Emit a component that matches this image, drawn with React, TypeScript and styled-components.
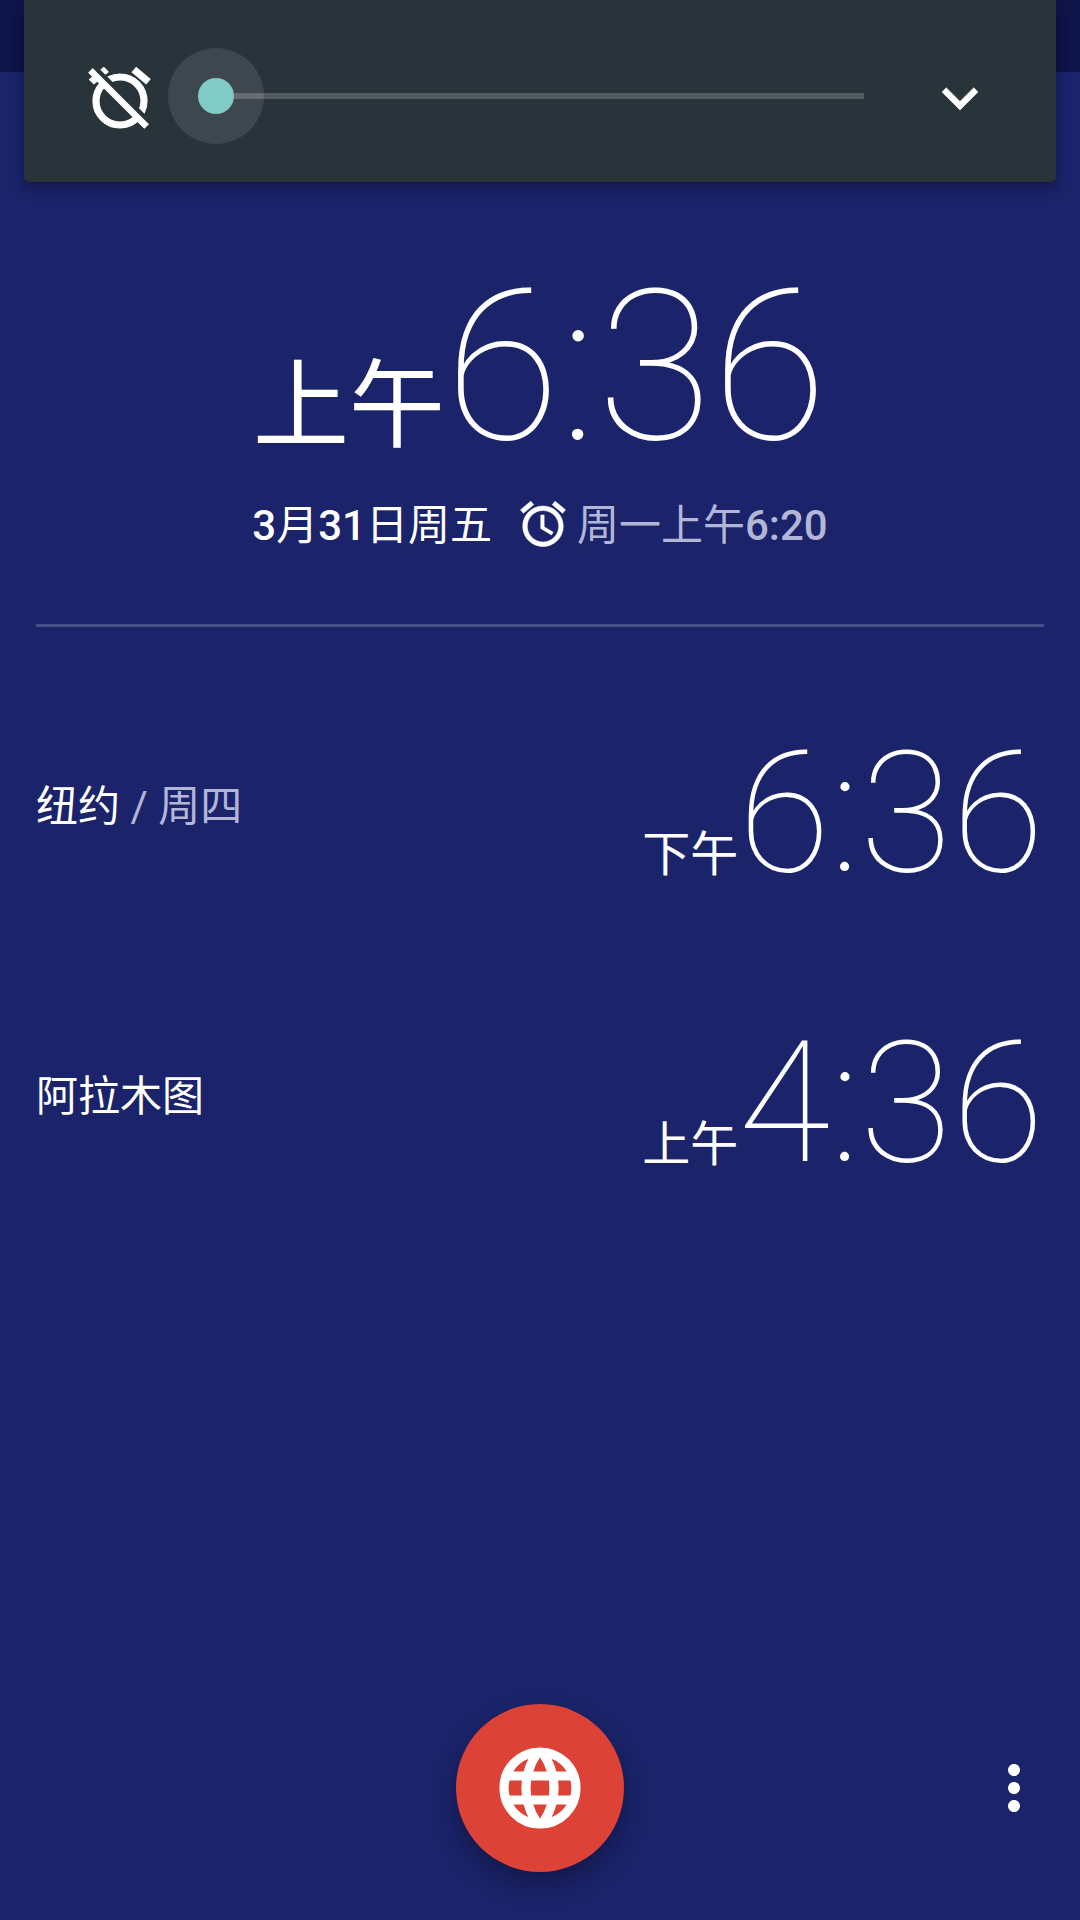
import React from 'react';
import styled, { createGlobalStyle } from 'styled-components';
import { MdAccessAlarm, MdAlarmOff, MdExpandMore, MdLanguage, MdMoreVert } from 'react-icons/md';

const GlobalStyle = createGlobalStyle`
  html, body {
    margin: 0;
    padding: 0;
    background: #1b236a;
  }
  body {
    font-family: Roboto, "Noto Sans CJK SC", sans-serif;
    color: #fff;
  }
`;

const Screen = styled.div`
  width: 1080px;
  height: 1920px;
  overflow: hidden;
  display: flex;
  flex-direction: column;
  background: linear-gradient(#0f1449 72px, #1b236a 72px);
`;

const VolumePanel = styled.div`
  margin: 0 24px;
  height: 182px;
  flex: none;
  box-sizing: border-box;
  padding: 10px 46px 0 60px;
  display: flex;
  align-items: center;
  background: #29333a;
  border-radius: 0 0 5px 5px;
  box-shadow: 0 6px 14px rgba(0, 0, 0, 0.3);
`;

const MuteIcon = styled(MdAlarmOff)`
  width: 72px;
  height: 72px;
  margin-top: 4px;
  flex: none;

  path:not([fill='none']) {
    stroke: currentColor;
    stroke-width: 0.4;
  }
`;

const Slider = styled.div`
  width: 696px;
  margin-left: 12px;
  margin-right: 60px;
  height: 96px;
  flex: none;
  display: flex;
  align-items: center;
`;

const Thumb = styled.div`
  width: 96px;
  height: 96px;
  flex: none;
  border-radius: 50%;
  background: rgba(255, 255, 255, 0.1);
  display: flex;
  align-items: center;
  justify-content: center;

  &::after {
    content: '';
    width: 36px;
    height: 36px;
    border-radius: 50%;
    background: #80cbc4;
  }
`;

const Track = styled.div`
  flex: 1;
  height: 6px;
  margin-left: -30px;
  background: rgba(255, 255, 255, 0.2);
`;

const CollapseIcon = styled(MdExpandMore)`
  width: 72px;
  height: 72px;
  flex: none;
  margin-top: 4px;

  path:not([fill='none']) {
    stroke: currentColor;
    stroke-width: 0.2;
  }
`;

const MainClock = styled.section`
  margin-top: 90px;
  display: flex;
  flex-direction: column;
  align-items: center;
`;

const BigTime = styled.div`
  display: flex;
  align-items: baseline;
  height: 190px;
  line-height: 190px;
`;

const BigPeriod = styled.span`
  font-size: 96px;
  font-weight: 400;
`;

const BigDigits = styled.span`
  font-size: 210px;
  font-weight: 100;
`;

const DateRow = styled.div`
  margin-top: 36px;
  display: flex;
  align-items: center;
  font-size: 42px;
  line-height: 56px;
`;

const Num = styled.b`
  font-weight: 500;
`;

const AlarmIcon = styled(MdAccessAlarm)`
  width: 54px;
  height: 54px;
  margin: -4px 6px 0 24px;

  path:not([fill='none']) {
    stroke: currentColor;
    stroke-width: 0.25;
  }
`;

const NextAlarm = styled.span`
  color: #b3b7d7;
  margin-left: 1px;
`;

const Divider = styled.hr`
  width: 1008px;
  height: 3px;
  border: 0;
  margin: 70px auto 0;
  background: rgba(255, 255, 255, 0.2);
`;

const CityList = styled.div`
  margin-top: 117px;
  padding: 0 36px;
  display: flex;
  flex-direction: column;
  gap: 150px;
`;

const CityRow = styled.div`
  display: flex;
  justify-content: space-between;
  align-items: flex-start;
  height: 140px;
`;

const CityName = styled.div`
  font-size: 42px;
  line-height: 56px;
  margin-top: 35px;
`;

const CityDay = styled.span`
  color: #b3b7d7;
`;

const CityTime = styled.div`
  display: flex;
  align-items: baseline;
  line-height: 140px;
  height: 140px;
`;

const CityPeriod = styled.span`
  font-size: 48px;
  font-weight: 400;
`;

const CityDigits = styled.span`
  font-size: 168px;
  font-weight: 100;
`;

const BottomBar = styled.div`
  margin-top: auto;
  height: 216px;
  flex: none;
  display: grid;
  grid-template-columns: 1fr 168px 1fr;
  align-items: start;
`;

const Fab = styled.button`
  grid-column: 2;
  width: 168px;
  height: 168px;
  padding: 0;
  border: 0;
  border-radius: 50%;
  background: #dc4336;
  color: #fff;
  display: flex;
  align-items: center;
  justify-content: center;
  box-shadow: 0 12px 24px rgba(0, 0, 0, 0.3);
`;

const GlobeIcon = styled(MdLanguage)`
  width: 96px;
  height: 96px;

  path:not([fill='none']) {
    stroke: currentColor;
    stroke-width: 0.3;
  }
`;

const MoreIcon = styled(MdMoreVert)`
  grid-column: 3;
  justify-self: end;
  width: 72px;
  height: 72px;
  margin: 48px 30px 0 0;
`;

const cities = [
  { name: '纽约', day: '周四', period: '下午', time: '6:36' },
  { name: '阿拉木图', day: '', period: '上午', time: '4:36' },
];

export default function App() {
  return (
    <Screen>
      <GlobalStyle />
      <VolumePanel>
        <MuteIcon />
        <Slider>
          <Thumb />
          <Track />
        </Slider>
        <CollapseIcon />
      </VolumePanel>

      <MainClock>
        <BigTime>
          <BigPeriod>上午</BigPeriod>
          <BigDigits>6:36</BigDigits>
        </BigTime>
        <DateRow>
          <span>
            <Num>3</Num>月<Num>31</Num>日周五
          </span>
          <AlarmIcon />
          <NextAlarm>
            周一上午<Num>6:20</Num>
          </NextAlarm>
        </DateRow>
      </MainClock>

      <Divider />

      <CityList>
        {cities.map(city => (
          <CityRow key={city.name}>
            <CityName>
              {city.name}
              {city.day && <CityDay> / {city.day}</CityDay>}
            </CityName>
            <CityTime>
              <CityPeriod>{city.period}</CityPeriod>
              <CityDigits>{city.time}</CityDigits>
            </CityTime>
          </CityRow>
        ))}
      </CityList>

      <BottomBar>
        <Fab>
          <GlobeIcon />
        </Fab>
        <MoreIcon />
      </BottomBar>
    </Screen>
  );
}
